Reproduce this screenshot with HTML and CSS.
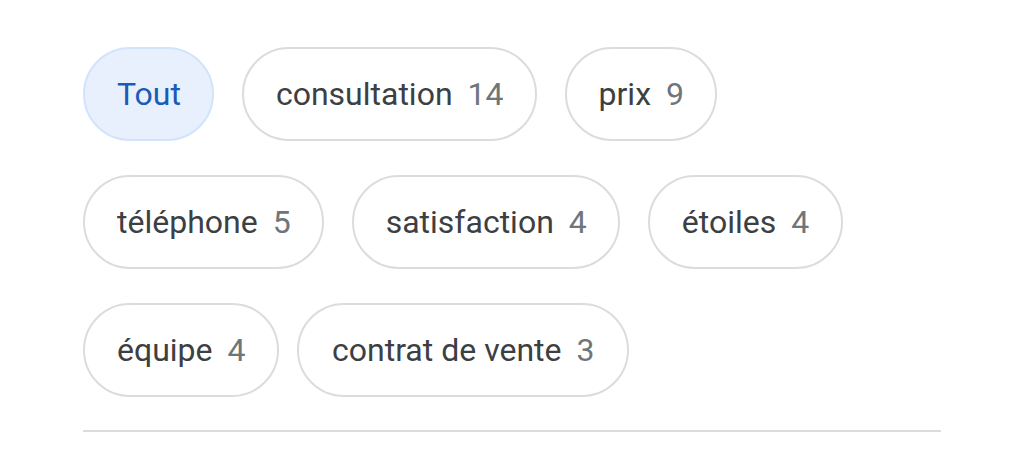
FILE: index.html
```html
<!DOCTYPE html>
<html lang="fr">
<head>
<meta charset="utf-8">
<link rel="stylesheet" href="styles.css">
</head>
<body>
<div class="panel">
  <div class="chips">
    <div class="chip active"><span class="label">Tout</span></div>
    <div class="chip"><span class="label">consultation</span><span class="count">14</span></div>
    <div class="chip"><span class="label">prix</span><span class="count">9</span></div>
    <div class="chip"><span class="label">téléphone</span><span class="count">5</span></div>
    <div class="chip"><span class="label">satisfaction</span><span class="count">4</span></div>
    <div class="chip"><span class="label">étoiles</span><span class="count">4</span></div>
    <div class="chip"><span class="label">équipe</span><span class="count">4</span></div>
    <div class="chip tight"><span class="label">contrat de vente</span><span class="count">3</span></div>
  </div>
  <div class="divider"></div>
</div>
</body>
</html>
```
FILE: styles.css
```css
html, body {
  margin: 0;
  padding: 0;
  background: #ffffff;
}
body {
  font-family: Roboto, "Liberation Sans", Arial, sans-serif;
}
.panel {
  padding: 47px 0 0 83px;
  width: 858px;
}
.chips {
  display: flex;
  flex-wrap: wrap;
  column-gap: 27.5px;
  row-gap: 34px;
}
.chip {
  box-sizing: border-box;
  height: 94px;
  display: flex;
  align-items: center;
  gap: 15px;
  padding: 0 31.5px 0 32px;
  border: 2px solid #dadce0;
  border-radius: 47px;
  font-size: 32px;
  color: #3c4043;
  background: #ffffff;
}
.chip .count {
  color: #70757a;
}
.chip.active {
  background: #e8f0fe;
  border-color: #d2e3fc;
  color: #1a5bb8;
}
.chip.tight {
  margin-left: -9.5px;
  padding: 0 33px 0 33px;
}
.divider {
  margin-top: 33px;
  height: 2px;
  background: #dadce0;
}
```
